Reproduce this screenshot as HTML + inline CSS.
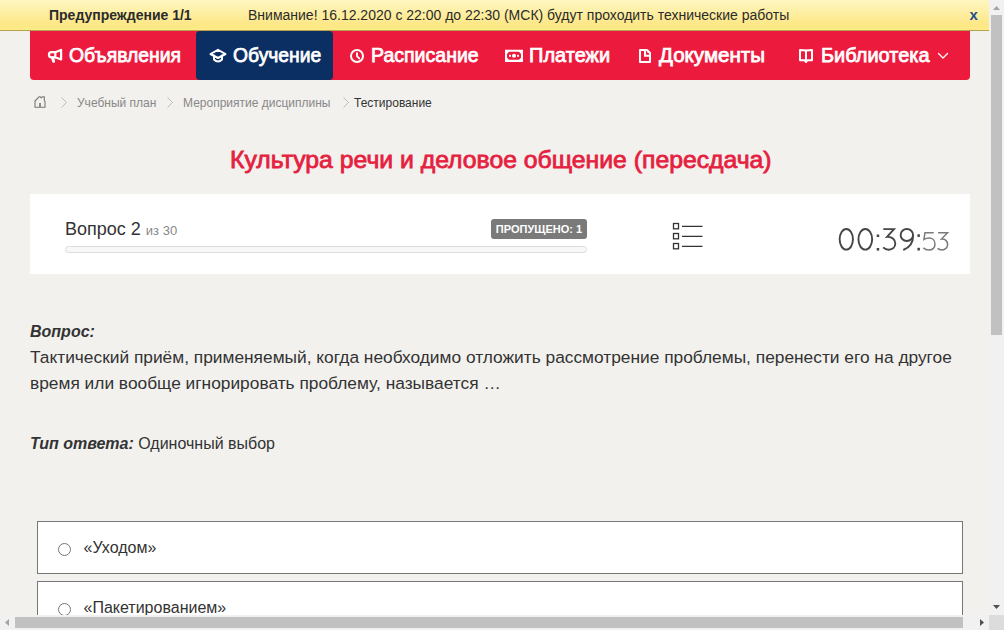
<!DOCTYPE html>
<html><head><meta charset="utf-8">
<style>
*{box-sizing:border-box;margin:0;padding:0}
html,body{width:1004px;height:630px;overflow:hidden;background:#f2f1ee;font-family:"Liberation Sans",sans-serif;color:#333}
.abs{position:absolute}
svg{position:absolute;overflow:visible}
#warn{position:absolute;left:0;top:0;width:989px;height:31px;background:linear-gradient(#fdf6c0 0%,#fde786 82%,#feec88 100%);border-bottom:1px solid #b5a24e}
#warn .t1{position:absolute;left:49px;top:7px;font-size:14px;font-weight:bold;color:#2b2b2b}
#warn .t2{position:absolute;left:248px;top:7px;font-size:14px;color:#2b2b2b}
#warn .x{position:absolute;left:969.5px;top:6px;font-size:15px;font-weight:bold;color:#1d4f8c}
#nav{position:absolute;left:30px;top:31px;width:940px;height:49px;background:#ec1b3e;border-radius:0 0 4px 4px}
#act{position:absolute;left:166px;top:0;width:137px;height:49px;background:#0b2f63;border-radius:4px}
.nt{position:absolute;top:13px;color:#fff;font-size:20px;font-weight:normal;-webkit-text-stroke:0.75px #fff;line-height:23px;white-space:nowrap;transform-origin:0 0}
#crumb{position:absolute;top:96px;left:0;font-size:12px;color:#888;white-space:nowrap}
#crumb span{position:absolute;top:0}
#title{position:absolute;top:146px;left:230px;font-size:24px;font-weight:normal;-webkit-text-stroke:0.8px #e5213f;color:#e5213f;white-space:nowrap;transform-origin:0 0}
#card{position:absolute;left:30px;top:194px;width:940px;height:80px;background:#fff}
.q{position:absolute;left:30px;font-size:17.33px;color:#333;white-space:nowrap}
.ans{position:absolute;left:37px;width:926px;height:53px;background:#fff;border:1px solid #767676}
.radio{position:absolute;left:20px;width:13px;height:13px;border:1px solid #767676;border-radius:50%;background:#fff}
.ans .tx{position:absolute;left:45.5px;font-size:16px;color:#333}
#vsb{position:absolute;left:989px;top:0;width:15px;height:615px;background:#f1f1f1}
#hsb{position:absolute;left:0;top:615px;width:989px;height:15px;background:#f1f1f1}
#corner{position:absolute;left:989px;top:615px;width:15px;height:15px;background:#dcdcdc}
</style></head>
<body>
<div id="warn">
  <div class="t1">Предупреждение 1/1</div>
  <div class="t2">Внимание! 16.12.2020 с 22:00 до 22:30 (МСК) будут проходить технические работы</div>
  <div class="x">x</div>
</div>
<div id="nav">
  <div id="act"></div>
  <div class="nt" style="left:39px;transform:scaleX(0.969)">Объявления</div>
  <div class="nt" style="left:203px;transform:scaleX(0.965)">Обучение</div>
  <div class="nt" style="left:341px;transform:scaleX(0.977)">Расписание</div>
  <div class="nt" style="left:499px;transform:scaleX(1.000)">Платежи</div>
  <div class="nt" style="left:629px;transform:scaleX(1.029)">Документы</div>
  <div class="nt" style="left:791px;transform:scaleX(0.998)">Библиотека</div>
</div>
<!-- nav icons, page coords -->
<svg width="1004" height="100" style="left:0;top:0" viewBox="0 0 1004 100">
  <g fill="none" stroke="#fff" stroke-width="2" stroke-linejoin="round" stroke-linecap="round">
    <!-- megaphone -->
    <path d="M55.3 52.2 L61.1 49.9 L61.1 59.5 L55.3 57.3 Z" stroke-width="2.2"/>
    <path d="M55.3 52.2 L51.5 52.2 A2.55 2.55 0 0 0 51.5 57.3 L55.3 57.3" stroke-width="2.2"/>
    <path d="M52.6 57.8 L53.6 61.3" stroke-width="3"/>
    <!-- grad cap -->
    <path d="M210.5 54 L218 49.8 L225.5 54 L218 58 Z"/>
    <path d="M214 55.5 L214 59.5 Q218 63.5 222 59.5 L222 55.5"/>
    <!-- clock -->
    <circle cx="357" cy="56" r="6"/>
    <path d="M357 53.2 L357 56.2 L359.2 58.4" stroke-width="1.9"/>
    <!-- doc -->
    <path d="M640 50 L647 50 L650 53 L650 62 L640 62 Z"/>
    <!-- book -->
    <path d="M800 50 L806 50.5 L812 50 L812 60.2 L807.5 60.2 L806 62 L804.5 60.2 L800 60.2 Z"/>
    <path d="M806 50.5 L806 60"/>
    <!-- chevron -->
    <path d="M938.5 53.5 L943 58 L947.5 53.5" stroke-width="1.3"/>
  </g>
  <!-- doc fold -->
  <path d="M645 50 L645 55.8 L650 55.8" fill="none" stroke="#fff" stroke-width="2"/>
  <path d="M647.5 50.5 L650 53 L647.5 53 Z" fill="#fff"/>
  <!-- money -->
  <path fill="#fff" fill-rule="evenodd" d="M505 49.8 H523 V62 H505 Z M509 51.8 L519 51.8 L521 54 L521 57.8 L519 59.8 L509 59.8 L507 57.8 L507 54 Z"/>
  <circle cx="514" cy="55.8" r="2" fill="#fff"/>
  <rect x="509" y="54.8" width="2" height="2" fill="#fff"/>
  <rect x="517" y="54.8" width="2" height="2" fill="#fff"/>
</svg>
<div id="crumb">
  <span style="left:77px">Учебный план</span>
  <span style="left:183px">Мероприятие дисциплины</span>
  <span style="left:354px;color:#333">Тестирование</span>
</div>
<svg width="1004" height="120" style="left:0;top:0">
  <g fill="none" stroke="#777" stroke-width="1.1" stroke-linejoin="round">
    <path d="M35 101 L39 96.8 L40.3 96.8 L41.3 98 L42.3 96.8 L44.3 96.8 L44.3 100.5 L45 101.3 L45 107.2 L35 107.2 Z"/>
    <path d="M40 103 L40 107" stroke-width="1.6"/>
  </g>
  <g fill="none" stroke="#bdbdbd" stroke-width="1">
    <path d="M61.5 97.5 L66.5 102.5 L61.5 107.5"/>
    <path d="M167.5 97.5 L172.5 102.5 L167.5 107.5"/>
    <path d="M343.5 97.5 L348.5 102.5 L343.5 107.5"/>
  </g>
</svg>
<div id="title" style="transform:scaleX(1.031)">Культура речи и деловое общение (пересдача)</div>
<div id="card">
  <div class="abs" style="left:35px;top:25px;font-size:18px;color:#333;white-space:nowrap">Вопрос 2 <span style="font-size:13px;color:#888">из 30</span></div>
  <div class="abs" style="left:35px;top:52px;width:522px;height:7px;border:1px solid #ddd;border-radius:4px;background:#f7f7f7"></div>
  <div class="abs" style="left:461px;top:25px;width:96px;height:20px;background:#7a7a7a;border-radius:3px;color:#fff;font-size:11px;font-weight:bold;text-align:center;line-height:20px">ПРОПУЩЕНО: 1</div>
  <svg width="60" height="60" style="left:630px;top:20px" viewBox="630 214 60 60">
    <g fill="none" stroke="#333" stroke-width="1.3">
      <rect x="643.5" y="223.5" width="5" height="5.3"/>
      <rect x="643.5" y="233.5" width="5" height="5.3"/>
      <rect x="643.5" y="243.5" width="5" height="5.3"/>
    </g>
    <g stroke="#333" stroke-width="1.35">
      <path d="M652 226.3 H672.5 M652 236.3 H672.5 M652 246.3 H672.5"/>
    </g>
  </svg>
  <svg width="1004" height="630" style="left:-30px;top:-194px">
    <g fill="none" stroke="#454545" stroke-width="1.9" stroke-linecap="butt">
      <ellipse cx="846.3" cy="239.35" rx="6.65" ry="10.3"/>
      <ellipse cx="865.3" cy="239.35" rx="6.85" ry="10.3"/>
      <path d="M883.3 229.1 H894 L887 236.9 C892.5 236.5 895.3 239.8 895.3 243.6 C895.3 247.6 892.3 249.7 888.8 249.7 C886.3 249.7 884.6 248.9 883.2 247.4"/>
      <ellipse cx="906.85" cy="235" rx="6.2" ry="5.95"/>
      <path d="M913.05 235.5 C913.2 242.5 909.5 247.6 903.3 250"/>
    </g>
    <g fill="#454545">
      <rect x="876.7" y="234.5" width="2.5" height="2.5"/>
      <rect x="876.7" y="248" width="2.5" height="2.6"/>
      <rect x="917.4" y="234.3" width="2.5" height="2.6"/>
      <rect x="917.4" y="247.8" width="2.5" height="2.7"/>
    </g>
    <g fill="none" stroke="#7a7a7a" stroke-width="1.5">
      <path d="M933.7 232.7 H925 L923.9 239.4 C925.5 238.4 927.3 237.9 929.1 237.9 C932.6 237.9 935 240.6 935 244.1 C935 247.6 932.5 250 929.1 250 C926.6 250 924.6 249.1 923.4 247.9"/>
      <path d="M938.1 232.7 H947.5 L941.4 239.1 C945.1 238.6 947.6 241.1 947.6 244.4 C947.6 247.6 945.1 250 941.9 250 C939.9 250 938.6 249.3 937.6 248.4"/>
    </g>
  </svg>
</div>
<div class="q" style="top:323px;font-size:16px;font-weight:bold;font-style:italic">Вопрос:</div>
<div class="q" style="top:347px">Тактический приём, применяемый, когда необходимо отложить рассмотрение проблемы, перенести его на другое</div>
<div class="q" style="top:373px">время или вообще игнорировать проблему, называется …</div>
<div class="q" style="top:435px;font-size:16px"><b><i>Тип ответа:</i></b> Одиночный выбор</div>
<div class="ans" style="top:521px"><div class="radio" style="top:21px"></div><div class="tx" style="top:17px">«Уходом»</div></div>
<div class="ans" style="top:581px"><div class="radio" style="top:21px"></div><div class="tx" style="top:17px">«Пакетированием»</div></div>
<div id="vsb"><div class="abs" style="left:2px;top:15px;width:11px;height:320px;background:#c1c1c1"></div></div>
<div id="hsb"><div class="abs" style="left:15px;top:2px;width:948px;height:11px;background:#c1c1c1"></div></div>
<div id="corner"></div>
<svg width="1004" height="630" style="left:0;top:0">
  <path d="M993 10 L1000 10 L996.5 6 Z" fill="#a3a3a3"/>
  <path d="M993 605 L1000 605 L996.5 609 Z" fill="#505050"/>
  <path d="M9 619 L9 626 L5 622.5 Z" fill="#a3a3a3"/>
  <path d="M980 619 L980 626 L984 622.5 Z" fill="#505050"/>
</svg>
</body></html>
